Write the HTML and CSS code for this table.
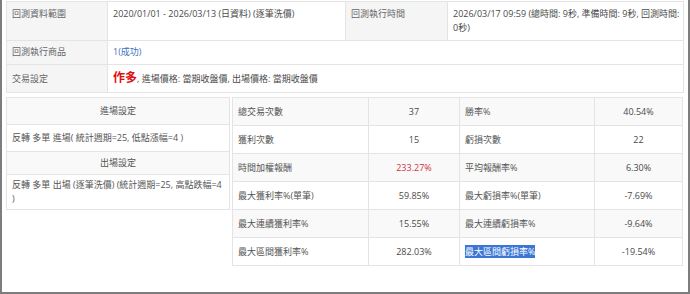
FILE: index.html
```html
<!DOCTYPE html>
<html lang="zh-Hant">
<head>
<meta charset="utf-8">
<title>回測結果</title>
<link rel="stylesheet" href="styles.css">
</head>
<body>
<div class="frame">
  <table class="info">
    <colgroup><col class="w-label"><col class="w-value"><col class="w-label2"><col class="w-value2"></colgroup>
    <tr class="r-range">
      <th>回測資料範圍</th>
      <td>2020/01/01 - 2026/03/13 (日資料) (逐筆洗價)</td>
      <th>回測執行時間</th>
      <td class="keep">2026/03/17 09:59 (總時間: 9秒, 準備時間: 9秒, 回測時間: 0秒)</td>
    </tr>
    <tr class="r-item">
      <th>回測執行商品</th>
      <td colspan="3"><span class="link">1(成功)</span></td>
    </tr>
    <tr class="r-trade">
      <th>交易設定</th>
      <td colspan="3"><span class="dir">作多</span>, 進場價格: 當期收盤價, 出場價格: 當期收盤價</td>
    </tr>
  </table>
  <div class="lower">
    <table class="setup">
      <tr class="s-head s-h1"><th>進場設定</th></tr>
      <tr class="s-row s-r1"><td>反轉 多單 進場( 統計週期=25, 低點漲幅=4 )</td></tr>
      <tr class="s-head s-h2"><th>出場設定</th></tr>
      <tr class="s-row s-r2"><td>反轉 多單 出場 (逐筆洗價) (統計週期=25, 高點跌幅=4 )</td></tr>
    </table>
    <table class="stats">
      <colgroup><col class="k1"><col class="v1"><col class="k2"><col class="v2"></colgroup>
      <tr><th>總交易次數</th><td>37</td><th>勝率%</th><td>40.54%</td></tr>
      <tr><th>獲利次數</th><td>15</td><th>虧損次數</th><td>22</td></tr>
      <tr><th>時間加權報酬</th><td class="pos">233.27%</td><th>平均報酬率%</th><td>6.30%</td></tr>
      <tr><th>最大獲利率%(單筆)</th><td>59.85%</td><th>最大虧損率%(單筆)</th><td>-7.69%</td></tr>
      <tr><th>最大連續獲利率%</th><td>15.55%</td><th>最大連續虧損率%</th><td>-9.64%</td></tr>
      <tr><th>最大區間獲利率%</th><td>282.03%</td><th><span class="selected">最大區間虧損率%</span></th><td>-19.54%</td></tr>
    </table>
  </div>
</div>
</body>
</html>
```
FILE: styles.css
```css
* { box-sizing: border-box; }
html, body { margin: 0; padding: 0; background: #fff; }
body {
  font-family: "Open Sans", "Noto Sans CJK TC", sans-serif;
  font-size: 9px;
  line-height: 14px;
  color: #555;
}
.frame {
  height: 294px;
  border: 2px solid #7d7d7d;
  border-top: 0;
  padding: 1px 5px 0 4px;
}
table { border-collapse: collapse; table-layout: fixed; }
th, td {
  border: 1px solid #e4e4e4;
  font-weight: normal;
  text-align: left;
  vertical-align: top;
  padding: 5px 5px;
}
.info { width: 677px; }
.info th { background: #f5f5f5; color: #666; }
.info td { color: #4a4a4a; }
.info td.keep { word-break: keep-all; padding-right: 2px; }
.w-label { width: 101px; }
.w-value { width: 238px; }
.w-label2 { width: 102px; }
.w-value2 { width: 236px; }
.r-range th, .r-range td { height: 38px; }
.r-item th, .r-item td { height: 23px; padding-top: 4px; }
.r-trade th, .r-trade td { height: 28px; padding-top: 7px; }
.r-trade td { padding-top: 4px; }
.link { color: #3b6fc0; }
.dir { color: #e01010; font-weight: bold; font-size: 12px; line-height: 18px; }

.lower {
  display: flex;
  align-items: flex-start;
  gap: 2px;
  margin-top: 4px;
}
.setup { width: 225px; }
.setup th, .setup td { color: #555; vertical-align: middle; padding: 3px 5px; }
.setup th { background: #f9f9f9; text-align: center; }
.s-h1 th { height: 27px; }
.s-r1 td { height: 27px; }
.s-h2 th { height: 23px; }
.s-r2 td { height: 34px; }

.stats { width: 450px; }
.k1 { width: 136px; }
.v1 { width: 91px; }
.k2 { width: 135px; }
.v2 { width: 88px; }
.stats th, .stats td { height: 28px; vertical-align: middle; padding: 4px 5px; }
.stats th { color: #555; }
.stats td { text-align: center; color: #4a4a4a; }
.stats tr:nth-child(odd) th, .stats tr:nth-child(odd) td { background: #f9f9f9; }
.stats td.pos { color: #d0333a; }
.selected { background: #3a76d6; color: #fff; }
```
